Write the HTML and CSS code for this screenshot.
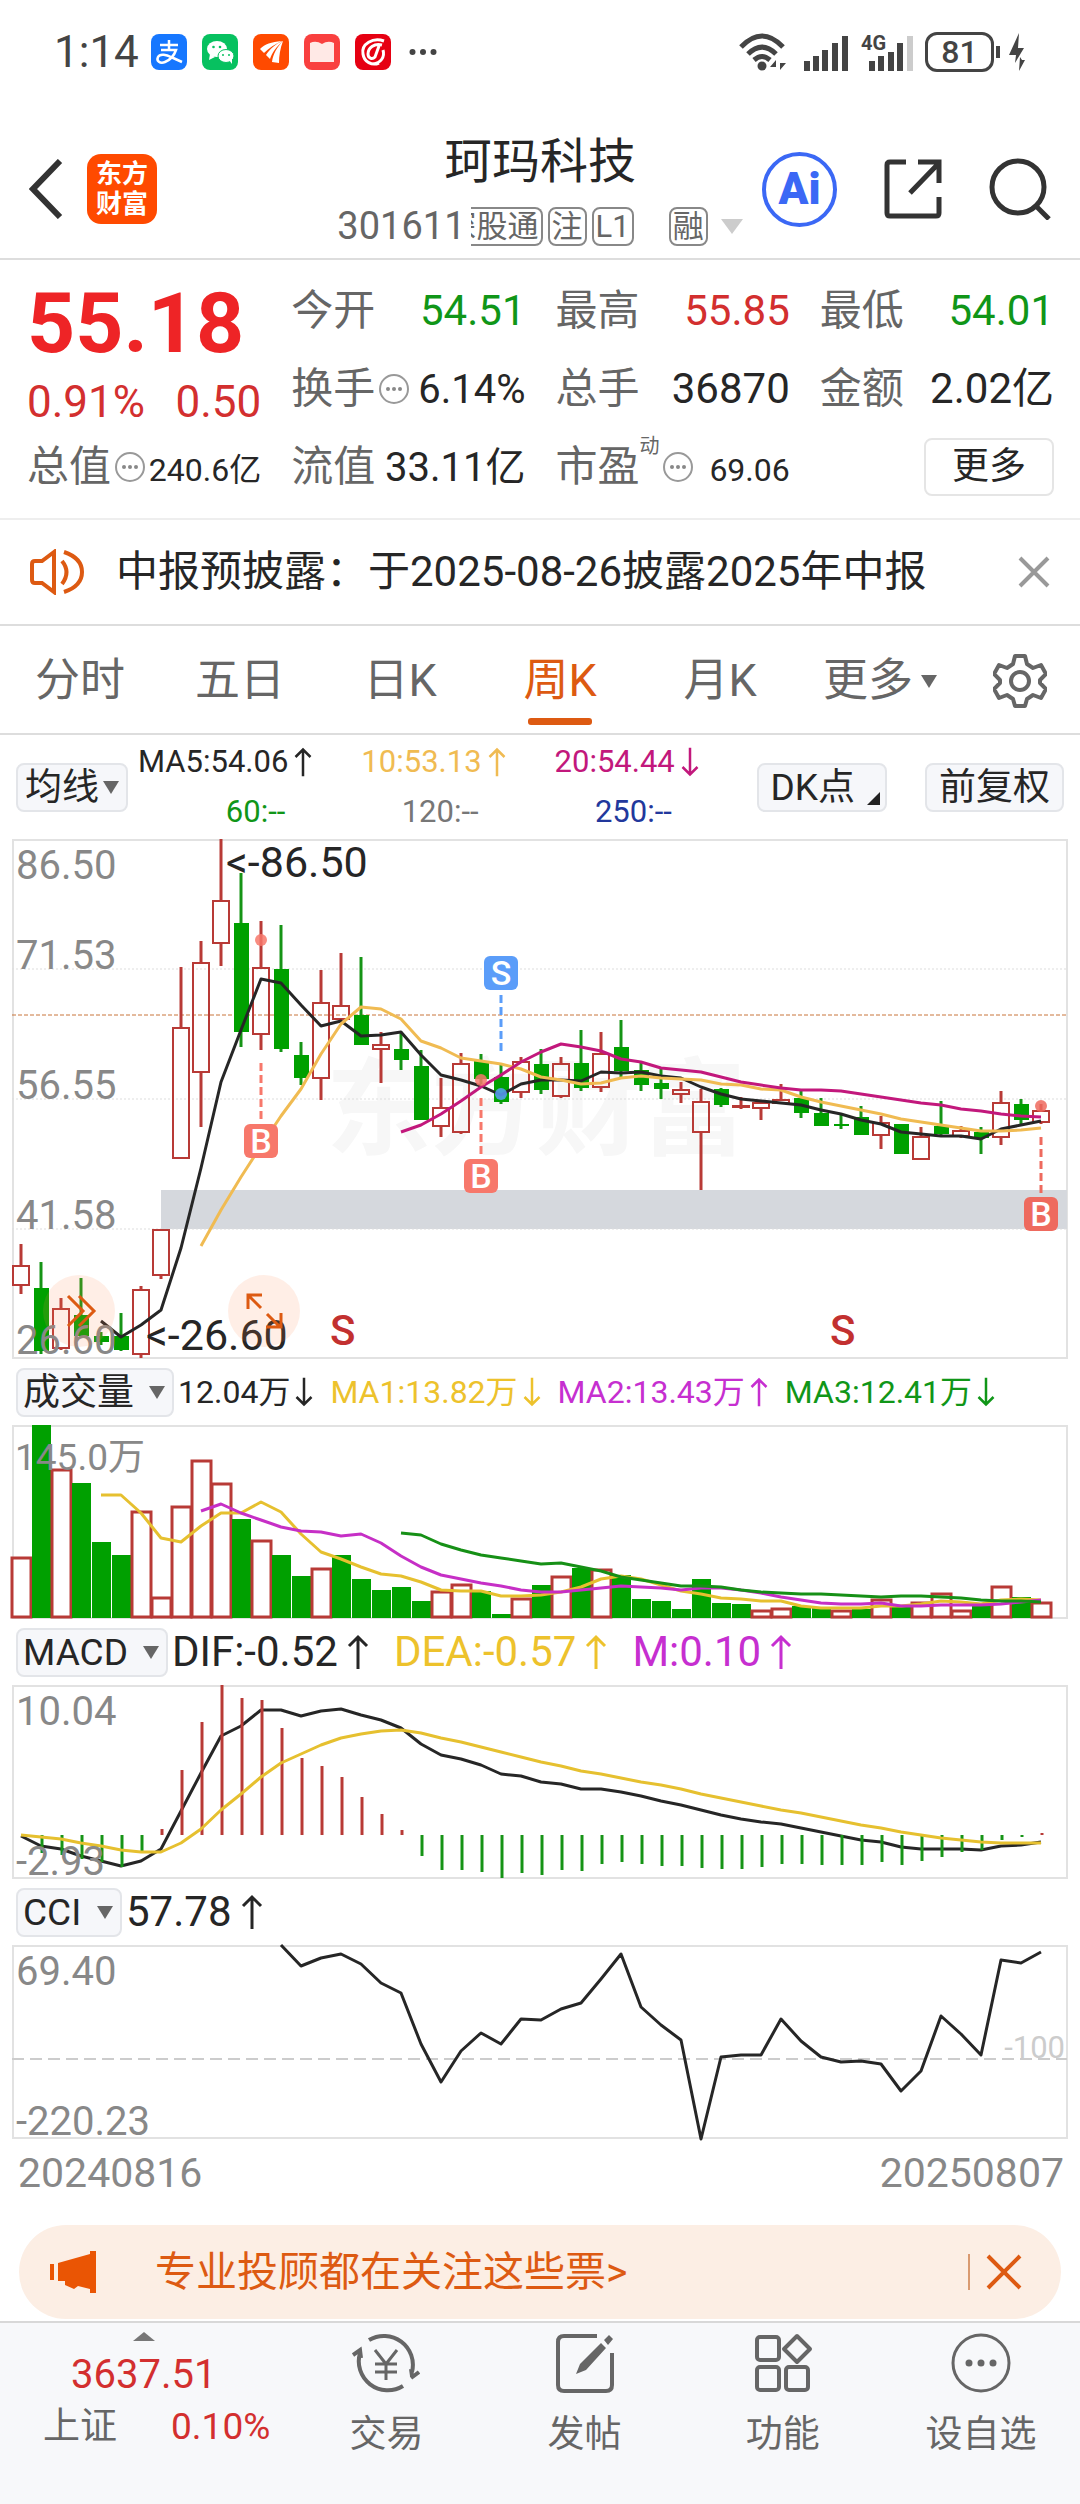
FILE: index.html
```html
<!DOCTYPE html>
<html lang="zh-CN">
<head>
<meta charset="UTF-8" />
<meta name="viewport" content="width=device-width, initial-scale=1" />
<title>珂玛科技 301611</title>
<link rel="stylesheet" href="styles.css">
</head>
<body>

<svg class="defs" aria-hidden="true">
  <symbol id="up" viewBox="0 0 24 36"><path d="M12 35V3M3 12l9-9 9 9" fill="none" stroke="currentColor" stroke-width="3"/></symbol>
  <symbol id="down" viewBox="0 0 24 36"><path d="M12 1v32M3 24l9 9 9-9" fill="none" stroke="currentColor" stroke-width="3"/></symbol>
  <symbol id="info" viewBox="0 0 32 32"><circle cx="16" cy="16" r="14" fill="none" stroke="#999" stroke-width="2"/><g fill="#888"><circle cx="10" cy="16" r="2"/><circle cx="16" cy="16" r="2"/><circle cx="22" cy="16" r="2"/></g></symbol>
</svg>

<div class="status">
  <span class="time">1:14</span>
  <div class="apps">
    <svg viewBox="0 0 36 36"><rect width="36" height="36" rx="8" fill="#1677ff"/><path d="M9 11h18M18 6v10M10 16h15c-2 6-6 10-11 12-5 2-9-1-7-5 2-4 9-2 13 0l11 5" fill="none" stroke="#fff" stroke-width="2.5"/></svg>
    <svg viewBox="0 0 36 36"><rect width="36" height="36" rx="8" fill="#07c160"/><g fill="#fff"><ellipse cx="15" cy="15" rx="10" ry="8"/><path d="M8 20l-1 6 6-3z"/><ellipse cx="24" cy="22" rx="8" ry="6.500" stroke="#07c160"/><path d="M27 26l3 4v-6z"/></g><g fill="#07c160"><circle cx="11.500" cy="13" r="1.300"/><circle cx="18" cy="13" r="1.300"/><circle cx="21" cy="21" r="1"/><circle cx="27" cy="21" r="1"/></g></svg>
    <svg viewBox="0 0 36 36"><rect width="36" height="36" rx="8" fill="#ff4a00"/><path d="M7 15c5-5 11-7 22-8-7 3-13 7-18 12zM13 21c4-6 9-11 17-14-7 6-11 12-13 18zM19 28c1-8 5-15 11-21-3 8-4 15-4 22z" fill="#fff"/></svg>
    <svg viewBox="0 0 36 36"><rect width="36" height="36" rx="8" fill="#f9403f"/><path d="M6 9q6-3 12 1 6-4 12-1v19H6z" fill="#ffe9e6"/></svg>
    <svg viewBox="0 0 36 36"><rect width="36" height="36" rx="8" fill="#e60012"/><path d="M29 7C18 3 6 10 8 20c1 8 9 12 16 9M27 11c-8-2-14 3-14 9 0 4 4 6 7 3l4-11M28 16c2 7-2 13-10 14" fill="none" stroke="#fff" stroke-width="3"/></svg>
  </div>
  <svg class="dots" viewBox="0 0 28 8"><g fill="#444"><circle cx="3.500" cy="4" r="3"/><circle cx="14" cy="4" r="3"/><circle cx="24.500" cy="4" r="3"/></g></svg>
  <svg class="wifi" viewBox="0 0 48 38"><g fill="none" stroke="#444" stroke-width="5"><path d="M2 14q21-22 42 0"/><path d="M9 21q14-14 28 0"/><path d="M15 27q8-7 16 0"/></g><circle cx="23" cy="33" r="4.500" fill="#444"/><path d="M37 27l-6 7h6zM41 27v10l6-7h-6z" fill="#444"/></svg>
  <svg class="bars" viewBox="0 0 44 38"><path d="M3 38V28M12 38V23M21 38V17M31 38V10M41 38V3" stroke="#444" stroke-width="6"/></svg>
  <svg class="lte" viewBox="0 0 52 38"><text x="0" y="17">4G</text><path d="M11 38V28M20 38V23M30 38V19M39 38V10" stroke="#444" stroke-width="6"/><path d="M49 38V3" stroke="#ccc" stroke-width="6"/></svg>
  <span class="battery">81</span>
  <svg class="bolt" viewBox="0 0 18 40"><path d="M11 1L1 23h7l-1 8 9-15h-6zM12 25l-1 14 6-11h-3z" fill="#444"/></svg>
</div>

<header class="header">
  <div class="header-left">
    <button class="icon-btn" aria-label="返回"><svg width="34" height="60" viewBox="0 0 34 60"><path d="M31 2L4 30l27 28" fill="none" stroke="#333" stroke-width="6"/></svg></button>
    <div class="logo">东方<br>财富</div>
  </div>
  <div class="title">
    <h1>珂玛科技</h1>
    <div class="sub">
      <span>301611</span>
      <span class="tag cut">深股通</span>
      <span class="tag">注</span>
      <span class="tag">L1</span>
      <span class="tag margin-tag">融</span>
      <i class="tri light"></i>
    </div>
  </div>
  <div class="header-right">
    <button class="ai" aria-label="AI助手">Ai</button>
    <button class="icon-btn" aria-label="分享"><svg width="58" height="60" viewBox="0 0 58 60"><path d="M22 3H6Q3 3 3 6v48q0 3 3 3h46q3 0 3-3V38M26 34L55 4M34 3h21v21" fill="none" stroke="#333" stroke-width="5"/></svg></button>
    <button class="icon-btn" aria-label="搜索"><svg width="62" height="62" viewBox="0 0 62 62"><circle cx="29" cy="29" r="26" fill="none" stroke="#333" stroke-width="5"/><path d="M47 48l13 13" stroke="#333" stroke-width="5"/></svg></button>
  </div>
</header>

<section class="quote">
  <div class="price">
    <strong>55.18</strong>
    <div class="change"><span>0.91%</span><span>0.50</span></div>
  </div>
  <div class="cell"><span>今开</span><b class="green">54.51</b></div>
  <div class="cell"><span>最高</span><b class="red">55.85</b></div>
  <div class="cell"><span>最低</span><b class="green">54.01</b></div>
  <div class="cell"><span>换手</span><svg><use href="#info"/></svg><b class="mid">6.14%</b></div>
  <div class="cell"><span>总手</span><b>36870</b></div>
  <div class="cell"><span>金额</span><b>2.02亿</b></div>
  <div class="cell"><span>总值</span><svg><use href="#info"/></svg><b class="small">240.6亿</b></div>
  <div class="cell"><span>流值</span><b class="mid">33.11亿</b></div>
  <div class="cell"><span>市盈</span><sup>动</sup><svg><use href="#info"/></svg><b class="small">69.06</b></div>
  <div class="cell"><button class="more">更多</button></div>
</section>

<section class="news">
  <svg width="54" height="46" viewBox="0 0 54 46"><g fill="none" stroke="#dd5a12" stroke-width="4"><path d="M24 3L12 12H5q-3 0-3 3v16q0 3 3 3h7l12 9z"/><path d="M32 12q9 11 0 23"/><path d="M34 3q18 6 18 20T34 43"/></g></svg>
  <p>中报预披露：于2025-08-26披露2025年中报</p>
  <button class="icon-btn" aria-label="关闭"><svg width="32" height="32" viewBox="0 0 32 32"><path d="M2 2l28 28M30 2L2 30" stroke="#999" stroke-width="4"/></svg></button>
</section>

<nav class="tabs">
  <button>分时</button>
  <button>五日</button>
  <button>日K</button>
  <button class="active">周K</button>
  <button>月K</button>
  <button>更多<i class="tri"></i></button>
  <button class="settings" aria-label="设置"><svg width="54" height="56" viewBox="0 0 54 56"><g fill="none" stroke="#666" stroke-width="4"><path d="M22 3h10l2 8 6 4 8-3 5 9-6 6v3l6 6-5 9-8-3-6 4-2 7H22l-2-7-6-4-8 3-5-9 6-6v-3l-6-6 5-9 8 3 6-4z" stroke-linejoin="round"/><circle cx="27" cy="28" r="9"/></g></svg></button>
</nav>

<div class="ma">
  <span class="pick"><select aria-label="均线"><option>均线</option></select></span>
  <div class="ma-list">
    <div><span>MA5:54.06<svg><use href="#up"/></svg></span><span class="green none">60:--</span></div>
    <div><span class="gold">10:53.13<svg><use href="#up"/></svg></span><span class="grey none">120:--</span></div>
    <div><span class="pink">20:54.44<svg><use href="#down"/></svg></span><span class="blue none">250:--</span></div>
  </div>
  <button class="chip corner">DK点</button>
  <button class="chip">前复权</button>
</div>

<main class="charts">
  <svg id="kline" viewBox="0 0 1056 520"></svg>

  <div class="row narrow">
    <span class="pick wide"><select aria-label="成交量指标"><option>成交量</option></select></span>
    <span>12.04万<svg><use href="#down"/></svg></span>
    <span class="yellow">MA1:13.82万<svg><use href="#down"/></svg></span>
    <span class="purple">MA2:13.43万<svg><use href="#up"/></svg></span>
    <span class="green">MA3:12.41万<svg><use href="#down"/></svg></span>
  </div>
  <svg id="volume" viewBox="0 0 1056 194"></svg>

  <div class="row">
    <span class="pick wide"><select aria-label="MACD指标"><option>MACD</option></select></span>
    <span>DIF:-0.52<svg><use href="#up"/></svg></span>
    <span class="yellow">DEA:-0.57<svg><use href="#up"/></svg></span>
    <span class="purple">M:0.10<svg><use href="#up"/></svg></span>
  </div>
  <svg id="macd" viewBox="0 0 1056 194"></svg>

  <div class="row">
    <span class="pick wide"><select aria-label="CCI指标"><option>CCI</option></select></span>
    <span>57.78<svg><use href="#up"/></svg></span>
  </div>
  <svg id="cci" viewBox="0 0 1056 194"></svg>

  <div class="dates"><span>20240816</span><span>20250807</span></div>
</main>

<div class="banner">
  <svg width="48" height="42" viewBox="0 0 48 42"><path d="M0 13h4v16H0zM8 12l32-9V0h6v42h-6v-4l-12-3-4 3-9-4v-4H8z" fill="#ea5504"/></svg>
  <a href="#">专业投顾都在关注这些票&gt;</a>
  <button class="icon-btn" aria-label="关闭"><svg width="36" height="36" viewBox="0 0 36 36"><path d="M2 2l32 32M34 2L2 34" stroke="#dd5a12" stroke-width="4"/></svg></button>
</div>

<nav class="bottom">
  <div class="index">
    <i class="tri-up"></i>
    <span class="red">3637.51</span>
    <div><span>上证</span><span class="red">0.10%</span></div>
  </div>
  <button><svg viewBox="0 0 68 60"><g fill="none" stroke="#666" stroke-width="4"><path d="M17 7a29 29 0 0 1 43 32M51 53A29 29 0 0 1 8 20M1 22l7-5 1 8M60 43l-1-7M67 39l-8 6"/><path d="M23 17l11 14 11-14M34 31v16M23 31h22M23 39h22" stroke-width="3"/></g></svg>交易</button>
  <button><svg viewBox="0 0 68 60"><path d="M46 3H13q-6 0-6 6v43q0 6 6 6h42q6 0 6-6V20" fill="none" stroke="#666" stroke-width="4"/><path d="M25 41l4-10L50 10l5 5-20 22zM53 7l5-5 4 4-5 6z" fill="#666"/></svg>发帖</button>
  <button><svg viewBox="0 0 68 60"><g fill="none" stroke="#666" stroke-width="4"><rect x="8" y="4" width="22" height="23" rx="3"/><rect x="8" y="34" width="22" height="23" rx="3"/><rect x="37" y="34" width="22" height="23" rx="3"/><path d="M48 3l13 13-13 13-13-13z" stroke-linejoin="round"/></g></svg>功能</button>
  <button><svg viewBox="0 0 68 60"><circle cx="34" cy="30" r="28" fill="none" stroke="#666" stroke-width="3"/><g fill="#666"><circle cx="22" cy="30" r="3.500"/><circle cx="34" cy="30" r="3.500"/><circle cx="46" cy="30" r="3.500"/></g></svg>设自选</button>
</nav>

<script src="charts.js"></script>
</body>
</html>
```
FILE: styles.css
```css
* {
  box-sizing: border-box;
}
body {
  margin: 0;
  min-height: 100vh;
  display: flex;
  flex-direction: column;
  background: #fff;
  color: #262626;
  font-family: Roboto, "Noto Sans CJK SC", sans-serif;
}
button, select {
  font-family: inherit;
  color: inherit;
  border: none;
  background: none;
  padding: 0;
  margin: 0;
  cursor: pointer;
}
svg {
  flex: none;
}
.defs {
  position: absolute;
  width: 0;
  height: 0;
}
.icon-btn {
  display: flex;
}
.red { color: #d32f2f; }
.green { color: #109618; }
.gold { color: #f0bb52; }
.yellow { color: #edc22c; }
.pink { color: #c2187c; }
.purple { color: #c62fd0; }
.blue { color: #22389c; }
.grey { color: #777; }

.tri {
  border: 8px solid transparent;
  border-top: 13px solid #666;
  border-bottom: 0;
}
.tri.light {
  border-width: 15px 11px 0;
  border-top-color: #ccc;
  margin-left: 8px;
}

/* status bar */
.status {
  display: flex;
  align-items: center;
  padding: 32px 54px 32px 54px;
  color: #444;
}
.time {
  font-size: 44px;
  line-height: 40px;
  margin-right: 12px;
}
.apps {
  display: flex;
  gap: 15px;
}
.apps svg {
  width: 36px;
  height: 36px;
}
.dots {
  width: 28px;
  height: 8px;
  margin: 0 auto 0 18px;
}
.wifi {
  width: 48px;
  height: 38px;
  margin-right: 17px;
}
.bars {
  width: 44px;
  height: 38px;
  margin-right: 13px;
}
.lte {
  width: 52px;
  height: 38px;
  margin-right: 12px;
  fill: #444;
  font-size: 20px;
  font-weight: 700;
}
.battery {
  position: relative;
  width: 69px;
  border: 3px solid #444;
  border-radius: 12px;
  font-size: 32px;
  font-weight: 500;
  line-height: 34px;
  text-align: center;
  margin-right: 14px;
}
.battery::after {
  content: "";
  position: absolute;
  right: -9px;
  top: 11px;
  width: 4px;
  height: 12px;
  background: #444;
}
.bolt {
  width: 18px;
  height: 40px;
}

/* title bar */
.header {
  display: grid;
  grid-template-columns: 1fr auto 1fr;
  align-items: center;
  padding: 28px 29px 12px;
  border-bottom: 2px solid #ddd;
}
.header-left, .header-right {
  display: flex;
  align-items: center;
}
.header-left {
  gap: 24px;
}
.header-right {
  justify-content: flex-end;
  gap: 47px;
}
.logo {
  width: 70px;
  height: 70px;
  padding-top: 5px;
  border-radius: 14px;
  background: #ff4a00;
  color: #fff;
  font-size: 26px;
  font-weight: 700;
  line-height: 30px;
  text-align: center;
}
.title {
  text-align: center;
}
.title h1 {
  margin: 0 0 14px;
  font-size: 48px;
  font-weight: 400;
  line-height: 60px;
}
.sub {
  display: flex;
  align-items: center;
  gap: 5px;
  height: 40px;
  font-size: 38px;
  color: #666;
}
.tag {
  border: 2px solid #888;
  border-radius: 8px;
  padding: 0 2px;
  font-size: 31px;
  line-height: 35px;
  white-space: nowrap;
}
.tag.cut {
  display: flex;
  justify-content: flex-end;
  width: 72px;
  overflow: hidden;
  border-left: none;
  border-radius: 0 8px 8px 0;
}
.margin-tag {
  margin-left: 30px;
}
.ai {
  width: 75px;
  height: 75px;
  border: 4px solid #3b68f5;
  border-radius: 50%;
  color: #3b68f5;
  font-size: 44px;
  font-weight: 900;
}

/* quote */
.quote {
  display: grid;
  grid-template-columns: repeat(4, 1fr);
  grid-auto-rows: 78px;
  column-gap: 30px;
  padding: 12px 26px 12px 27px;
  border-bottom: 2px solid #eee;
}
.price {
  grid-row: span 2;
  color: #ee2426;
}
.price strong {
  display: block;
  padding-top: 10px;
  font-size: 84px;
  font-weight: 700;
  line-height: 84px;
}
.change {
  display: flex;
  justify-content: space-between;
  padding-top: 12px;
  font-size: 44px;
  line-height: 48px;
  color: #d32f2f;
}
.cell {
  display: flex;
  align-items: baseline;
  line-height: 78px;
}
.cell span {
  font-size: 42px;
  color: #666;
}
.cell svg {
  align-self: center;
  width: 32px;
  height: 32px;
  margin-left: 3px;
}
.cell sup {
  align-self: flex-start;
  margin-right: -1px;
  font-size: 20px;
  line-height: 36px;
  color: #666;
}
.cell b {
  margin-left: auto;
  font-size: 42px;
  font-weight: 400;
}
.cell b.mid {
  font-size: 40px;
}
.cell b.small {
  font-size: 32px;
}
.more {
  align-self: center;
  margin-left: auto;
  padding: 0 26px;
  border: 2px solid #e5e5e5;
  border-radius: 8px;
  font-size: 37px;
  line-height: 54px;
}

/* news */
.news {
  display: flex;
  align-items: center;
  padding: 29px 30px;
  border-bottom: 2px solid #ddd;
}
.news p {
  flex: 1;
  margin: 0 0 0 32px;
  font-size: 42px;
  line-height: 46px;
}

/* period tabs */
.tabs {
  display: flex;
  align-items: center;
  padding: 26px 0 23px;
  border-bottom: 2px solid #ddd;
}
.tabs button {
  flex: 4;
  position: relative;
  display: flex;
  justify-content: center;
  align-items: center;
  gap: 8px;
  font-size: 45px;
  line-height: 58px;
  color: #666;
}
.tabs .settings {
  flex: 3;
}
.tabs .active {
  color: #dd5a12;
}
.tabs .active::after {
  content: "";
  position: absolute;
  left: 48px;
  right: 48px;
  bottom: -15px;
  height: 7px;
  border-radius: 3px;
  background: #dd5a12;
}

/* moving averages */
.ma {
  display: flex;
  align-items: center;
  padding: 2px 16px;
}
.pick {
  position: relative;
  display: inline-flex;
}
.pick::after {
  content: "";
  position: absolute;
  right: 9px;
  top: 18px;
  border: 8px solid transparent;
  border-top: 13px solid #666;
  border-bottom: 0;
  pointer-events: none;
}
.pick select, .chip {
  appearance: none;
  height: 49px;
  border: 2px solid #e3e5e9;
  border-radius: 8px;
  background: #f6f7fa;
  font-size: 37px;
  line-height: 45px;
}
.pick select {
  padding: 0 27px 0 7px;
}
.pick.wide select {
  padding: 0 38px 0 5px;
}
.ma-list {
  flex: 1;
  display: flex;
  gap: 48px;
  margin-left: 10px;
  font-size: 31px;
  line-height: 50px;
}
.ma-list span {
  display: flex;
  align-items: center;
}
.ma-list svg {
  width: 20px;
  height: 30px;
  margin-left: 5px;
}
.ma-list .none {
  justify-content: flex-end;
  padding-right: 28px;
}
.chip {
  padding: 0 12px;
}
.chip.corner {
  position: relative;
  padding-right: 30px;
  margin-right: 38px;
}
.chip.corner::after {
  content: "";
  position: absolute;
  right: 5px;
  bottom: 5px;
  border-left: 13px solid transparent;
  border-bottom: 13px solid #222;
}

/* charts */
.charts {
  padding: 0 12px;
}
.charts > svg {
  display: block;
  width: 100%;
  overflow: visible;
}
.row {
  display: flex;
  align-items: center;
  gap: 24px;
  height: 66px;
  padding-left: 4px;
  font-size: 42px;
  line-height: 62px;
}
.row.narrow {
  gap: 16px;
  font-size: 32px;
}
.row .pick {
  margin-right: -20px;
}
.row.narrow .pick {
  margin-right: -12px;
}
.row > span {
  display: flex;
  align-items: center;
}
.row svg {
  width: 24px;
  height: 36px;
  margin-left: 8px;
}
.row.narrow svg {
  width: 20px;
  margin-left: 4px;
}
.frame { fill: none; stroke: #e2e2e2; stroke-width: 2; }
.grid { stroke: #ddd; stroke-width: 1; stroke-dasharray: 2 2; }
.base { stroke: #c8743a; stroke-width: 1; stroke-dasharray: 4 2; }
.level { stroke: #ccc; stroke-width: 2; stroke-dasharray: 12 6; }
.gap-band { fill: #d5d8dd; }
.axis { fill: #888; font-size: 40px; }
.axis.unit { font-size: 37px; }
.level-text { fill: #ccc; font-size: 31px; text-anchor: end; }
.mark { fill: #262626; font-size: 43px; }
.sell { fill: #c23030; font-size: 42px; font-weight: 500; }
.watermark { fill: #f7f7f7; font-size: 105px; font-weight: 700; }
.rise { fill: #fff; stroke: #b83a36; stroke-width: 2; }
.rise-line { stroke: #b83a36; stroke-width: 2; }
.fall { fill: #00a000; }
.fall-line { stroke: #169416; stroke-width: 2; }
.candles .rise { fill: none; }
.candles line, .candles path { stroke-width: 3; }
.bars-group .rise { stroke-width: 3; }
.hist { stroke-width: 3; }
.line { fill: none; stroke-width: 3; stroke-linejoin: round; }
.badge-text { fill: #fff; font-size: 34px; font-weight: 500; text-anchor: middle; }
.float { fill: #fd8a4c; fill-opacity: 0.14; }
.float-icon { fill: none; stroke: #dd5a12; stroke-width: 3; }
.dates {
  display: flex;
  justify-content: space-between;
  padding: 0 4px 0 6px;
  font-size: 41px;
  line-height: 69px;
  color: #888;
}

/* banner */
.banner {
  display: flex;
  align-items: center;
  margin: 17px 19px 0;
  padding: 24px 39px 24px 31px;
  border-radius: 47px;
  background: #fceee4;
}
.banner a {
  flex: 1;
  margin-left: 57px;
  font-size: 41px;
  line-height: 46px;
  color: #dd5a12;
  text-decoration: none;
}
.banner .icon-btn {
  padding-left: 16px;
  border-left: 2px solid #d99a70;
}

/* bottom bar */
.bottom {
  display: flex;
  align-items: flex-start;
  flex: 1;
  margin-top: 2px;
  border-top: 2px solid #d8d8d8;
  background: #f7f8fa;
  color: #666;
}
.index {
  flex: 29;
  display: flex;
  flex-direction: column;
  align-items: center;
  padding-top: 9px;
  font-size: 37px;
}
.tri-up {
  border: 11px solid transparent;
  border-top: 0;
  border-bottom: 9px solid #777;
}
.index > .red {
  font-size: 40px;
  line-height: 52px;
  margin-top: 8px;
}
.index div {
  display: flex;
  gap: 54px;
  line-height: 52px;
  padding-left: 26px;
}
.bottom button {
  flex: 20;
  display: flex;
  flex-direction: column;
  align-items: center;
  padding-top: 10px;
  font-size: 37px;
  line-height: 54px;
}
.bottom button svg {
  width: 68px;
  height: 60px;
  margin-bottom: 15px;
}
```
FILE: charts.js
```js
const STEP = 20;
const FIRST = 9;
const x = i => FIRST + i * STEP;

// type, high, body top, body bottom, low
const candles = [
  ['r',405,427,446,455], ['g',423,449,512,515], ['r',459,470,509,511], ['g',439,476,497,499],
  ['g',493,497,503,506], ['g',474,497,511,512], ['r',447,451,515,519], ['r',390,391,436,440],
  ['r',128,189,319,319], ['r',102,124,233,288], ['r',0,62,104,127], ['g',34,84,193,208],
  ['r',82,129,195,211], ['g',86,130,210,213], ['g',203,216,239,246], ['r',131,164,239,261],
  ['r',114,167,180,180], ['g',118,176,206,206], ['r',193,206,210,244], ['g',194,210,221,231],
  ['g',211,227,281,281], ['r',239,269,287,298], ['r',214,225,293,295], ['g',215,222,240,245],
  ['g',225,238,263,265], ['r',218,223,253,259], ['g',210,225,251,255], ['r',218,225,257,259],
  ['g',191,224,249,252], ['r',193,215,248,253], ['g',181,208,232,238], ['g',224,231,246,252],
  ['g',230,244,250,260], ['r',243,251,255,264], ['r',250,263,293,351], ['g',249,250,266,268],
  ['r',258,267,268,270], ['r',264,264,269,281], ['r',245,261,264,264], ['g',251,259,274,279],
  ['g',259,274,287,287], ['g',276,285,287,290], ['g',267,278,296,296], ['r',277,284,296,310],
  ['g',285,285,315,315], ['r',288,298,320,320], ['g',262,287,295,296], ['r',287,292,297,299],
  ['g',288,293,299,315], ['r',252,264,298,306], ['g',260,265,281,285], ['r',265,272,283,285]
];
const ma5 = [482,498,486,471,409,329,243,191,140,144,166,187,182,197,196,193,216,236,241,247,256,245,241,241,242,233,234,233,237,239,248,255,260,262,264,266,271,275,281,285,293,295,297,297,300,290,286,282];
const ma10 = [407,371,338,307,277,250,215,185,168,170,180,202,209,219,222,225,230,238,241,245,244,239,237,239,240,241,245,246,250,251,258,263,267,271,275,280,283,286,289,292,292,291,289];
const ma20 = [293,286,275,262,248,236,223,213,205,208,212,220,223,229,231,233,238,243,246,249,251,251,252,255,258,261,264,266,270,272,275,277,278];

// bar heights, negative = falling week
const volume = [61,-193,149,-135,-76,-63,107,21,112,158,135,-99,78,-63,-42,50,-63,-39,-28,-31,-17,27,34,-27,-4,20,-33,42,-50,49,-43,-19,-17,-9,-39,-15,-14,8,10,-12,-10,8,-9,19,-11,16,25,8,-12,32,-21,16];
const vol1 = [70,70,88,113,117,101,88,88,77,87,109,127,134,142,149,151,157,165,166,166,171,171,170,167,162,154,151,154,160,166,169,173,174,176,176,181,183,183,183,181,181,179,176,177,179,175,174,175];
const vol2 = [86,79,88,95,102,106,107,111,109,118,131,142,150,154,158,161,165,167,167,165,163,161,162,163,165,163,163,165,168,172,175,178,179,179,178,181,181,180,180,180,179,177,175];
const vol3 = [108,110,119,125,130,133,136,139,138,142,146,152,155,158,161,161,162,165,167,168,169,169,170,171,172,171,171,172,173,175,176,176,177];

const ZERO = 150;
const hist = [150,168,170,174,177,182,167,144,85,37,0,13,15,43,73,81,92,112,129,145,171,185,185,187,193,188,190,185,186,179,177,179,181,181,183,184,184,182,179,179,180,180,180,177,180,176,172,167,165,155,152,148];
const dif = [151,161,164,171,176,181,176,164,126,88,51,41,25,25,31,26,24,30,35,43,59,70,74,80,89,91,97,99,104,104,107,111,116,120,125,130,134,137,139,143,147,151,155,157,162,164,164,164,165,161,160,157];
const dea = [150,152,154,158,161,165,167,167,158,144,125,109,92,78,69,60,53,49,46,45,48,53,57,62,67,72,77,81,86,89,93,97,100,104,109,113,117,121,125,128,132,136,140,143,147,150,153,155,157,158,158,158];

const cci = [0,21,13,9,19,38,48,99,137,106,88,99,74,75,64,58,34,9,62,80,95,194,112,110,110,74,96,112,117,116,119,146,126,71,89,110,15,18,7];

function line(values, start, color) {
  const pts = values.map((v, i) => x(start + i) + ',' + v).join(' ');
  return `<polyline class="line" stroke="${color}" points="${pts}"/>`;
}

function hline(cls, y) {
  return `<line class="${cls}" x1="0" x2="1055" y1="${y}" y2="${y}"/>`;
}

function text(cls, tx, ty, str) {
  return `<text class="${cls}" x="${tx}" y="${ty}">${str}</text>`;
}

function frame(h) {
  return `<rect class="frame" x="1" y="1" width="1054" height="${h - 2}"/>`;
}

function candle([type, high, top, bottom, low], i) {
  const c = x(i);
  if (type === 'g') {
    return `<line class="fall-line" x1="${c}" x2="${c}" y1="${high}" y2="${low}"/>
      <rect class="fall" x="${c - 7}" y="${top}" width="15" height="${bottom - top}"/>`;
  }
  return `<path class="rise-line" d="M${c} ${high}V${top}M${c} ${bottom}V${low}"/>
    <rect class="rise" x="${c - 8}" y="${top}" width="16" height="${bottom - top}"/>`;
}

// trade marker: dot on the candle, dashed stem, letter badge
function badge(i, letter, dotY, y1, y2, boxY, color) {
  const c = x(i);
  return `<circle cx="${c}" cy="${dotY}" r="6" fill="${color}" fill-opacity="0.85"/>
    <line x1="${c}" x2="${c}" y1="${y1}" y2="${y2}" stroke="${color}" stroke-width="3" stroke-dasharray="8 4"/>
    <rect x="${c - 17}" y="${boxY}" width="34" height="34" rx="6" fill="${color}"/>
    ${text('badge-text', c, boxY + 29, letter)}`;
}

document.getElementById('kline').innerHTML =
  text('watermark', 314, 307, '东方财富') +
  frame(520) +
  '<rect class="gap-band" x="149" y="351" width="906" height="39"/>' +
  hline('grid', 130) + hline('grid', 260) + hline('grid', 390) + hline('base', 176) +
  '<g class="candles">' + candles.map(candle).join('') + '</g>' +
  line(ma5, 4, '#262626') + line(ma10, 9, '#f0bb52') + line(ma20, 19, '#c2187c') +
  badge(12, 'B', 101, 224, 281, 285, '#f7786b') +
  badge(23, 'B', 241, 259, 316, 320, '#f7786b') +
  badge(24, 'S', 255, 156, 213, 117, '#5b9df9') +
  badge(51, 'B', 267, 298, 354, 358, '#ee6a5e') +
  text('axis', 4, 40, '86.50') + text('axis', 4, 130, '71.53') + text('axis', 4, 260, '56.55') +
  text('axis', 4, 390, '41.58') + text('axis', 4, 515, '26.60') +
  text('mark', 214, 38, '&lt;-86.50') + text('mark', 134, 511, '&lt;-26.60') +
  text('sell', 318, 506, 'S') + text('sell', 818, 506, 'S') +
  '<circle class="float" cx="67" cy="472" r="36"/><circle class="float" cx="252" cy="472" r="36"/>' +
  '<path class="float-icon" d="M56 457l15 15-15 15M67 457l15 15-15 15"/>' +
  '<path class="float-icon" d="M249 469l-13-13M236 470v-14h14M255 475l13 13M269 474v14h-15"/>';

document.getElementById('volume').innerHTML =
  frame(194) +
  '<g class="bars-group">' + volume.map((v, i) => {
    const h = Math.abs(v);
    return v < 0
      ? `<rect class="fall" x="${x(i) - 9}" y="${193 - h}" width="19" height="${h}"/>`
      : `<rect class="rise" x="${x(i) - 9}" y="${194 - h}" width="19" height="${h - 2}"/>`;
  }).join('') + '</g>' +
  line(vol1, 4, '#e6c02f') + line(vol2, 9, '#c62fc6') + line(vol3, 19, '#169016') +
  text('axis unit', 3, 45, '145.0万');

document.getElementById('macd').innerHTML =
  frame(194) +
  line(dif, 0, '#262626') +
  hist.map((v, i) => {
    const cls = v < ZERO ? 'rise-line' : 'fall-line';
    return `<line class="${cls} hist" x1="${x(i) + 1}" x2="${x(i) + 1}" y1="${ZERO}" y2="${v}"/>`;
  }).join('') +
  line(dea, 0, '#e6c02f') +
  text('axis', 4, 40, '10.04') + text('axis', 4, 190, '-2.93');

document.getElementById('cci').innerHTML =
  frame(194) + hline('level', 114) +
  line(cci, 13, '#262626') +
  text('axis', 4, 40, '69.40') + text('axis', 4, 190, '-220.23') +
  text('level-text', 1053, 113, '-100');
```
